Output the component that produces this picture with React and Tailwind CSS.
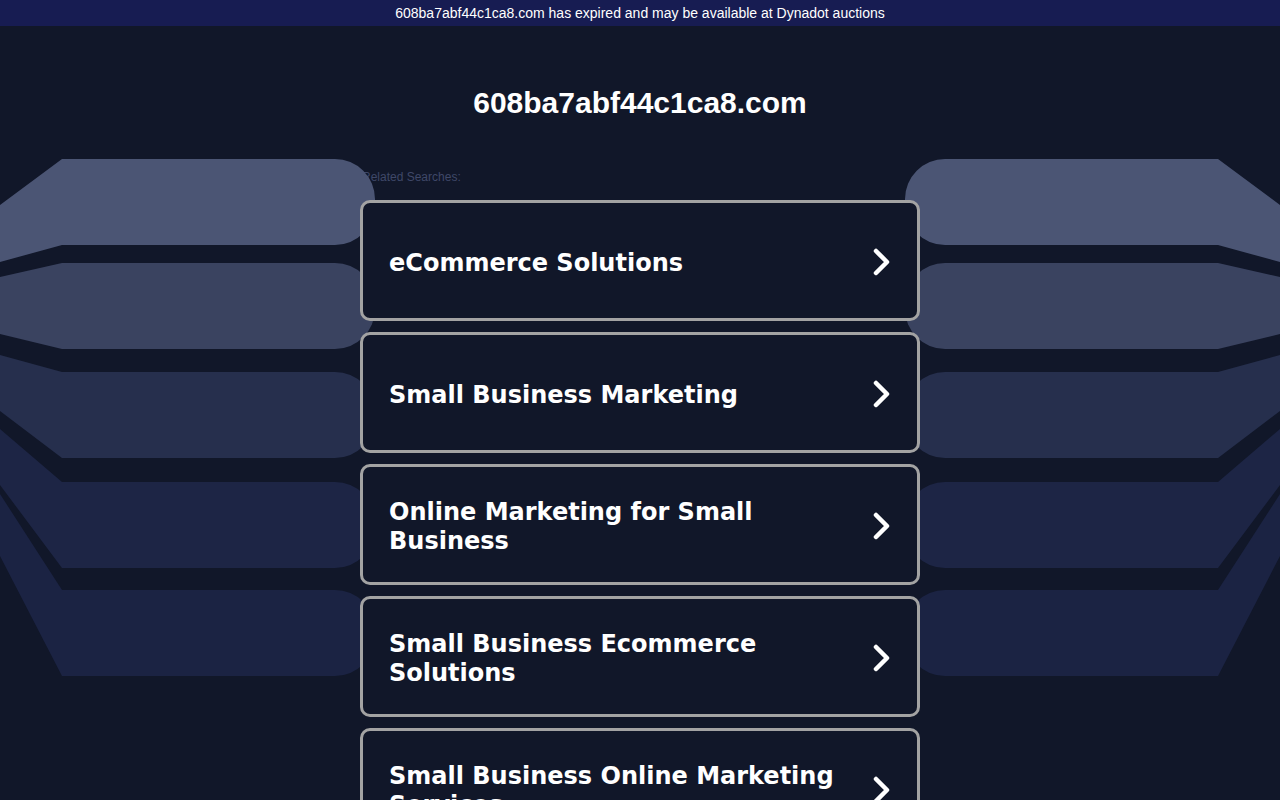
import React from "react";

const searches = [
  "eCommerce Solutions",
  "Small Business Marketing",
  "Online Marketing for Small Business",
  "Small Business Ecommerce Solutions",
  "Small Business Online Marketing Services",
];

// background bands: [top, bottom, leftTop, leftBottom, color]
const bands = [
  [159, 245, 205, 262, "#4b5574"],
  [263, 349, 277, 334, "#3a4360"],
  [372, 458, 355, 411, "#262f4d"],
  [482, 568, 429, 485, "#1d2545"],
  [590, 676, 494, 556, "#1b2343"],
];

const bandPath = ([t, b, lt, lb]) => {
  const r = 40;
  return `M0,${lt} L62,${t} L${375 - r},${t} A${r},${r} 0 0 1 375,${t + r} L375,${b - r} A${r},${r} 0 0 1 ${375 - r},${b} L62,${b} L0,${lb} Z`;
};

const Bands = ({ flip }) => (
  <svg
    width="380"
    height="800"
    viewBox="0 0 380 800"
    className={flip ? "absolute top-0 right-0 -scale-x-100" : "absolute top-0 left-0"}
  >
    {bands.map((band, i) => (
      <path key={i} d={bandPath(band)} fill={band[4]} />
    ))}
  </svg>
);

const Chevron = () => (
  <svg width="20" height="28" viewBox="0 0 20 28" className="mt-[2px] shrink-0">
    <polyline
      points="4,3 15,14 4,25"
      fill="none"
      stroke="white"
      strokeWidth="4.5"
      strokeLinecap="round"
      strokeLinejoin="round"
    />
  </svg>
);

export default function App() {
  return (
    <div className="relative h-[800px] overflow-hidden bg-[#111729]">
      <div className="relative z-20 flex h-[26px] items-center justify-center bg-[#171c52] font-['Liberation_Sans',Arial,sans-serif] text-[14px] text-white">
        608ba7abf44c1ca8.com has expired and may be available at Dynadot auctions
      </div>

      <div className="mx-auto w-[560px]">
        <h1 className="mt-[61px] h-[32px] text-center font-['Liberation_Sans',Arial,sans-serif] text-[30px] font-bold leading-[32px] text-white">
          608ba7abf44c1ca8.com
        </h1>
        <div className="mt-[51px] pl-[2px] font-['Liberation_Sans',Arial,sans-serif] text-[12px] leading-[14px] text-[#3f4868]">
          Related Searches:
        </div>
      </div>

      <Bands />
      <Bands flip />

      <div className="relative z-10 mx-auto mt-[16px] flex w-[560px] flex-col gap-[11px]">
        {searches.map((s) => (
          <a
            key={s}
            href="#"
            className="flex h-[121px] shrink-0 items-center justify-between rounded-[10px] border-[3px] border-[#a3a3a3] bg-[#111729] pl-[26px] pr-[25px]"
          >
            <span className="max-w-[460px] pt-[5px] font-['DejaVu_Sans',Verdana,sans-serif] text-[24px] font-bold leading-[29px] text-white">
              {s}
            </span>
            <Chevron />
          </a>
        ))}
      </div>
    </div>
  );
}
